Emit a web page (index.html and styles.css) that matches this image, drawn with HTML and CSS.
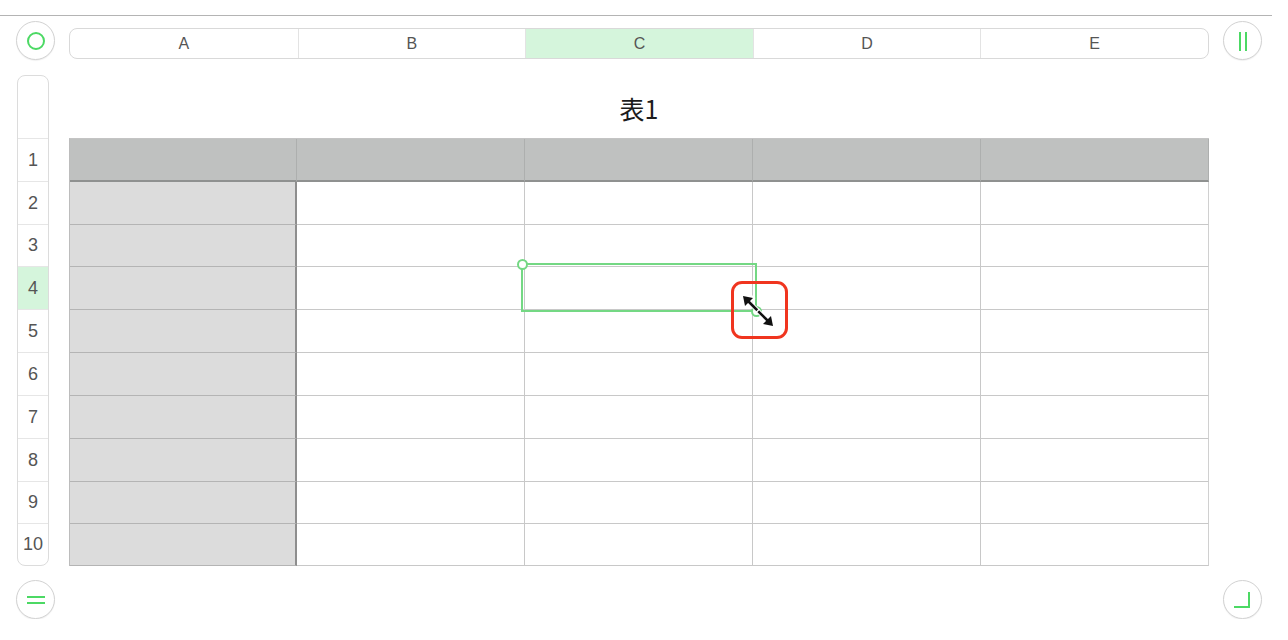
FILE: index.html
```html
<!DOCTYPE html>
<html lang="ja">
<head>
	<meta charset="utf-8">
	<title>表1</title>
	<link rel="stylesheet" href="styles.css">
</head>

<body>
	<div class="topline"></div>

	<div class="sheet">
		<button class="round">
			<svg width="20" height="20" viewBox="0 0 20 20"><circle cx="10" cy="10" r="8" fill="none" stroke="#4cd964" stroke-width="2"/></svg>
		</button>

		<div class="colbar">
			<div class="colhead">A</div>
			<div class="colhead">B</div>
			<div class="colhead active">C</div>
			<div class="colhead">D</div>
			<div class="colhead">E</div>
		</div>

		<button class="round">
			<svg width="20" height="20" viewBox="0 0 20 20"><path d="M7 1v19M13 1v19" stroke="#4cd964" stroke-width="2"/></svg>
		</button>

		<div class="rowbar">
			<div class="rowhead blank"></div>
			<div class="rowhead r43">1</div>
			<div class="rowhead r43">2</div>
			<div class="rowhead r42">3</div>
			<div class="rowhead r43 active">4</div>
			<div class="rowhead r43">5</div>
			<div class="rowhead r43">6</div>
			<div class="rowhead r43">7</div>
			<div class="rowhead r43">8</div>
			<div class="rowhead r42">9</div>
			<div class="rowhead last">10</div>
		</div>

		<div class="content">
			<div class="title">表1</div>
			<div class="tablewrap">
				<div class="grid">
					<div class="cell hdr stub"></div><div class="cell hdr"></div><div class="cell hdr"></div><div class="cell hdr"></div><div class="cell hdr"></div>
					<div class="cell stub"></div><div class="cell"></div><div class="cell"></div><div class="cell"></div><div class="cell"></div>
					<div class="cell stub"></div><div class="cell"></div><div class="cell"></div><div class="cell"></div><div class="cell"></div>
					<div class="cell stub"></div><div class="cell"></div><div class="cell"></div><div class="cell"></div><div class="cell"></div>
					<div class="cell stub"></div><div class="cell"></div><div class="cell"></div><div class="cell"></div><div class="cell"></div>
					<div class="cell stub"></div><div class="cell"></div><div class="cell"></div><div class="cell"></div><div class="cell"></div>
					<div class="cell stub"></div><div class="cell"></div><div class="cell"></div><div class="cell"></div><div class="cell"></div>
					<div class="cell stub"></div><div class="cell"></div><div class="cell"></div><div class="cell"></div><div class="cell"></div>
					<div class="cell stub"></div><div class="cell"></div><div class="cell"></div><div class="cell"></div><div class="cell"></div>
					<div class="cell stub"></div><div class="cell"></div><div class="cell"></div><div class="cell"></div><div class="cell"></div>
				</div>

				<div class="selection">
					<span class="handle start"></span>
					<span class="handle end"></span>
				</div>

				<svg class="cursor" width="38" height="38" viewBox="0 0 38 38">
					<g stroke="#fff" stroke-width="4.5" stroke-linejoin="round" fill="#fff">
						<path d="M9 9L29 29"/>
						<path d="M4 4L14 6L6 14Z"/>
						<path d="M34 34L24 32L32 24Z"/>
					</g>
					<g fill="#111">
						<path d="M8 8L30 30" stroke="#111" stroke-width="2.6"/>
						<path d="M4 4L14 6L6 14Z"/>
						<path d="M34 34L24 32L32 24Z"/>
					</g>
					<path d="M17 20.5L20.5 17" stroke="#fff" stroke-width="1.4"/>
				</svg>

				<div class="callout"></div>
			</div>
		</div>

		<div></div>

		<button class="round bottom">
			<svg width="20" height="20" viewBox="0 0 20 20"><path d="M1 7h18M1 13h18" stroke="#4cd964" stroke-width="2"/></svg>
		</button>
		<div></div>
		<button class="round bottom">
			<svg width="20" height="20" viewBox="0 0 20 20"><path d="M16 2v15H1" fill="none" stroke="#4cd964" stroke-width="2"/></svg>
		</button>
	</div>
</body>

</html>
```

FILE: styles.css
```css
body {
	margin: 0;
	font-family: "Liberation Sans", "Noto Sans CJK JP", sans-serif;
	color: #555;
	background: #fff;
}

.topline {
	height: 15px;
	margin-right: 16px;
	border-bottom: 1px solid #b4b4b4;
}

.sheet {
	display: grid;
	grid-template-columns: 39px 1140px 39px;
	grid-template-rows: 40px auto 53px;
	column-gap: 14px;
	padding: 5px 0 0 16px;
}

.round {
	width: 39px;
	height: 39px;
	padding: 0;
	border: 1.5px solid #d2d2d2;
	border-radius: 50%;
	background: #fff;
	box-shadow: 0 1px 1px rgba(0, 0, 0, 0.06);
	display: flex;
	align-items: center;
	justify-content: center;
}

.round.bottom {
	margin-top: 14px;
}

.colbar {
	margin-top: 7px;
	height: 31px;
	box-sizing: border-box;
	border: 1px solid #d9d9d9;
	border-radius: 8px;
	overflow: hidden;
	display: grid;
	grid-template-columns: repeat(5, 1fr);
}

.colhead {
	display: flex;
	align-items: center;
	justify-content: center;
	font-size: 16px;
	color: #555;
	border-left: 1px solid #e3e3e3;
}

.colhead:first-child {
	border-left: none;
}

.colhead.active {
	background: #d5f5dc;
}

.rowbar {
	margin: 14px 0 0 1px;
	width: 32px;
	box-sizing: border-box;
	border: 1px solid #dcdcdc;
	border-radius: 8px;
	overflow: hidden;
	align-self: start;
}

.rowhead {
	box-sizing: border-box;
	border-bottom: 1px solid #e6e6e6;
	display: flex;
	align-items: center;
	justify-content: center;
	font-size: 18px;
	color: #555;
}

.rowhead.blank {
	height: 63px;
}

.rowhead.r43 {
	height: 43px;
}

.rowhead.r42 {
	height: 42px;
}

.rowhead.last {
	height: 41px;
	border-bottom: none;
}

.rowhead.active {
	background: #d5f5dc;
}

.title {
	height: 77px;
	padding-top: 31px;
	box-sizing: border-box;
	text-align: center;
	font-family: "Noto Sans CJK JP", "Liberation Sans", sans-serif;
	font-size: 25px;
	line-height: 32px;
	color: #1c1c1c;
}

.tablewrap {
	position: relative;
}

.grid {
	display: grid;
	grid-template-columns: 227px 228px 228px 228px 228px;
	grid-template-rows: 43px 43px 42px 43px 43px 43px 43px 43px 42px 42px;
	border-top: 1px solid #c4c4c4;
	border-left: 1px solid #bcbcbc;
}

.cell {
	box-sizing: border-box;
	border-right: 1px solid #c8c8c8;
	border-bottom: 1px solid #c8c8c8;
	background: #fff;
}

.cell:nth-child(5n) {
	border-right-color: #d0d0d0;
}

.cell.stub {
	background: #dcdcdc;
	border-right: 2px solid #8e8e8e;
	border-bottom-color: #b4b4b4;
}

.cell.hdr {
	background: #bfc1c0;
	border-right-color: #adafae;
	border-bottom: 2px solid #8f9190;
}

.cell.hdr.stub {
	border-right: 1px solid #adafae;
}

.selection {
	position: absolute;
	left: 452px;
	top: 125px;
	width: 236px;
	height: 49px;
	box-sizing: border-box;
	border: 2px solid #74d884;
}

.handle {
	position: absolute;
	width: 11px;
	height: 11px;
	box-sizing: border-box;
	border: 2px solid #74d884;
	border-radius: 50%;
	background: #fff;
}

.handle.start {
	left: -6.5px;
	top: -6.5px;
}

.handle.end {
	right: -6.5px;
	bottom: -6.5px;
}

.cursor {
	position: absolute;
	left: 670px;
	top: 154px;
}

.callout {
	position: absolute;
	left: 662px;
	top: 143px;
	width: 57px;
	height: 58px;
	box-sizing: border-box;
	border: 3px solid #f0351f;
	border-radius: 11px;
}
```
